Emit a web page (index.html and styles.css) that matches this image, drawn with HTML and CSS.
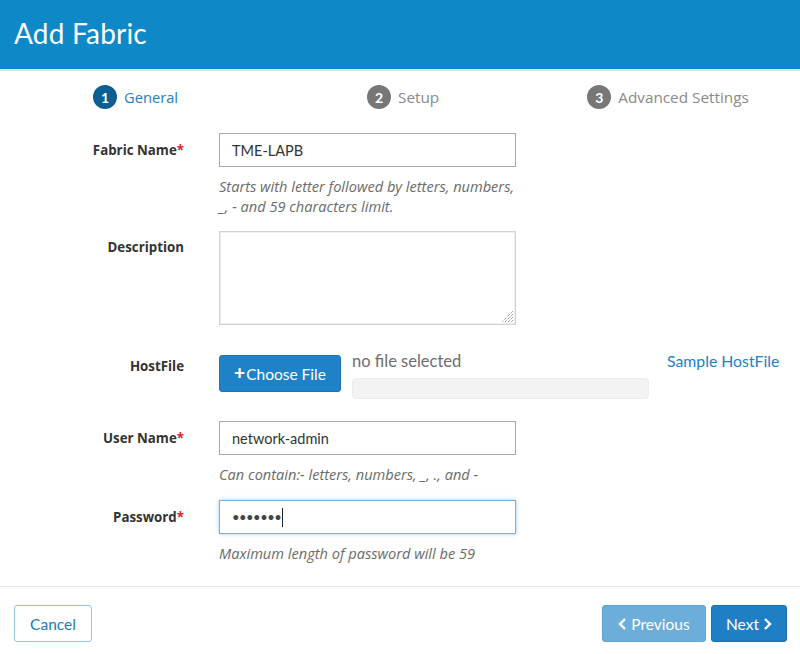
FILE: index.html
```html
<!DOCTYPE html>
<html>
<head>
<meta charset="utf-8">
<link rel="stylesheet" href="styles.css">
</head>
<body>
<div class="page">
  <header class="hdr"><h1>Add Fabric</h1></header>
  <nav class="steps">
    <div class="step active"><span class="num">1</span><span class="lbl">General</span></div>
    <div class="step s2"><span class="num">2</span><span class="lbl">Setup</span></div>
    <div class="step s3"><span class="num">3</span><span class="lbl">Advanced Settings</span></div>
  </nav>
  <main class="form">
    <div class="row r-name">
      <label class="flabel">Fabric Name<span class="req">*</span></label>
      <div class="fcol">
        <div class="input">TME-LAPB</div>
        <div class="hint">Starts with letter followed by letters, numbers,<br>_, - and 59 characters limit.</div>
      </div>
    </div>
    <div class="row r-desc">
      <label class="flabel">Description</label>
      <div class="fcol">
        <div class="textarea"><svg class="grip" width="12" height="12" viewBox="0 0 12 12"><path d="M11 3L3 11M11 6L6 11M11 9L9 11M11 0L0 11" stroke="#777" stroke-width="1" stroke-dasharray="1 1"/></svg></div>
      </div>
    </div>
    <div class="row r-host">
      <label class="flabel">HostFile</label>
      <div class="hostcol">
        <button class="choose"><span class="plus">+</span>Choose File</button>
        <div class="filebox">
          <div class="nofile">no file selected</div>
          <div class="bar"></div>
        </div>
        <a class="sample">Sample HostFile</a>
      </div>
    </div>
    <div class="row r-user">
      <label class="flabel">User Name<span class="req">*</span></label>
      <div class="fcol">
        <div class="input">network-admin</div>
        <div class="hint">Can contain:- letters, numbers, _, ., and -</div>
      </div>
    </div>
    <div class="row r-pass">
      <label class="flabel">Password<span class="req">*</span></label>
      <div class="fcol">
        <div class="input focus"><span class="dots">•••••••</span><span class="caret"></span></div>
        <div class="hint">Maximum length of password will be 59</div>
      </div>
    </div>
  </main>
  <footer class="foot">
    <button class="btn cancel">Cancel</button>
    <div class="navbtns">
      <button class="btn prev"><svg width="9" height="12" viewBox="0 0 9 12"><path d="M7 1L2 6l5 5" fill="none" stroke="#fff" stroke-width="2.4"/></svg>Previous</button>
      <button class="btn next">Next<svg width="9" height="12" viewBox="0 0 9 12"><path d="M2 1l5 5-5 5" fill="none" stroke="#fff" stroke-width="2.4"/></svg></button>
    </div>
  </footer>
</div>
</body>
</html>
```
FILE: styles.css
```css
* { box-sizing: border-box; }
html, body { margin: 0; padding: 0; background: #fff; }
body { font-family: Lato, "Open Sans", "Liberation Sans", sans-serif; color: #333; width: 800px; height: 654px; overflow: hidden; }
.hdr { background: #0f88c7; border-bottom: 2px solid #e4e4e4; display: flex; align-items: center; padding-left: 14px; height: 71px; }
.hdr h1 { margin: 0; color: #fff; font-weight: 400; font-size: 28px; letter-spacing: 0.2px; position: relative; top: -2px; }
.steps { display: flex; height: 52px; align-items: center; }
.step { display: flex; align-items: center; gap: 7px; font-size: 15.3px; color: #8a8a8a; font-family: "Open Sans", Lato, sans-serif; }
.step .num { width: 24px; height: 24px; border-radius: 50%; background: #777; color: #fff; font-size: 14px; font-weight: 700; display: flex; align-items: center; justify-content: center; font-family: Lato, sans-serif; }
.step.active { margin-left: 93px; color: #1c80c5; }
.step.active .num { background: #0d5e93; }
.step.active .lbl { font-size: 14.7px; }
.s2 { margin-left: 189px; }
.s3 { margin-left: 148px; }
.form { padding-top: 10px; height: 464px; border-bottom: 1px solid #e6e6e6; }
.row { display: flex; }
.flabel { width: 184px; text-align: right; font-family: "Open Sans", Lato, sans-serif; font-weight: 700; font-size: 13.3px; color: #333; padding-top: 8px; margin-right: 35px; }
.req { color: #e0202a; }
.fcol { width: 297px; }
.input { height: 34px; border: 1px solid #a9a9a9; font-size: 14.5px; padding: 0 12px; display: flex; align-items: center; color: #333; }
.input.focus { border-color: #6db3e6; box-shadow: 0 0 4px rgba(100,170,230,0.6); }
.dots { font-size: 13px; letter-spacing: -0.5px; color: #444; }
.caret { width: 1px; height: 19px; background: #222; margin-left: 1px; }
.hint { font-family: "Open Sans", Lato, sans-serif; font-style: italic; color: #6b6b6b; font-size: 14.6px; line-height: 20px; margin-top: 9px; white-space: nowrap; }
.r-desc { margin-top: 15px; }
.r-desc .flabel { padding-top: 7px; }
.textarea { height: 94px; border: 1px solid #d2d2d2; box-shadow: inset 0 0 0 1px #eee; position: relative; }
.grip { position: absolute; right: 1px; bottom: 1px; }
.r-host { margin-top: 30px; }
.r-host .flabel { padding-top: 2px; }
.hostcol { display: flex; align-items: flex-start; }
.choose { width: 122px; height: 37px; background: #1f82c8; color: #fff; border: 1px solid #1a74b5; border-radius: 3px; font-family: inherit; font-size: 15.5px; padding: 0; display: flex; align-items: center; justify-content: center; }
.plus { font-weight: 900; font-size: 19px; margin-right: 1px; position: relative; top: -1px; }
.filebox { margin-left: 11px; width: 297px; }
.nofile { font-size: 16.5px; color: #6e6e6e; line-height: 20px; margin-top: -4px; }
.bar { height: 21px; background: #f3f3f3; border: 1px solid #ececec; border-radius: 4px; margin-top: 7px; }
.sample { margin-left: 18px; color: #1c80c5; font-size: 15.8px; margin-top: -4px; }
.r-user { margin-top: 22px; }
.r-pass { margin-top: 16px; }
.foot { display: flex; justify-content: space-between; padding: 18px 13px 0 14px; }
.btn { font-family: inherit; font-size: 15.5px; height: 37px; border-radius: 3px; display: flex; align-items: center; justify-content: center; gap: 4px; padding: 0; }
.cancel { width: 78px; background: #fff; color: #1c7cc1; border: 1px solid #8ec5ea; }
.navbtns { display: flex; gap: 5px; }
.prev { width: 104px; background: #6cadda; color: #fff; border: 1px solid #63a6d6; }
.next { width: 76px; background: #1f7fc4; color: #fff; border: 1px solid #1a71b0; }
```
